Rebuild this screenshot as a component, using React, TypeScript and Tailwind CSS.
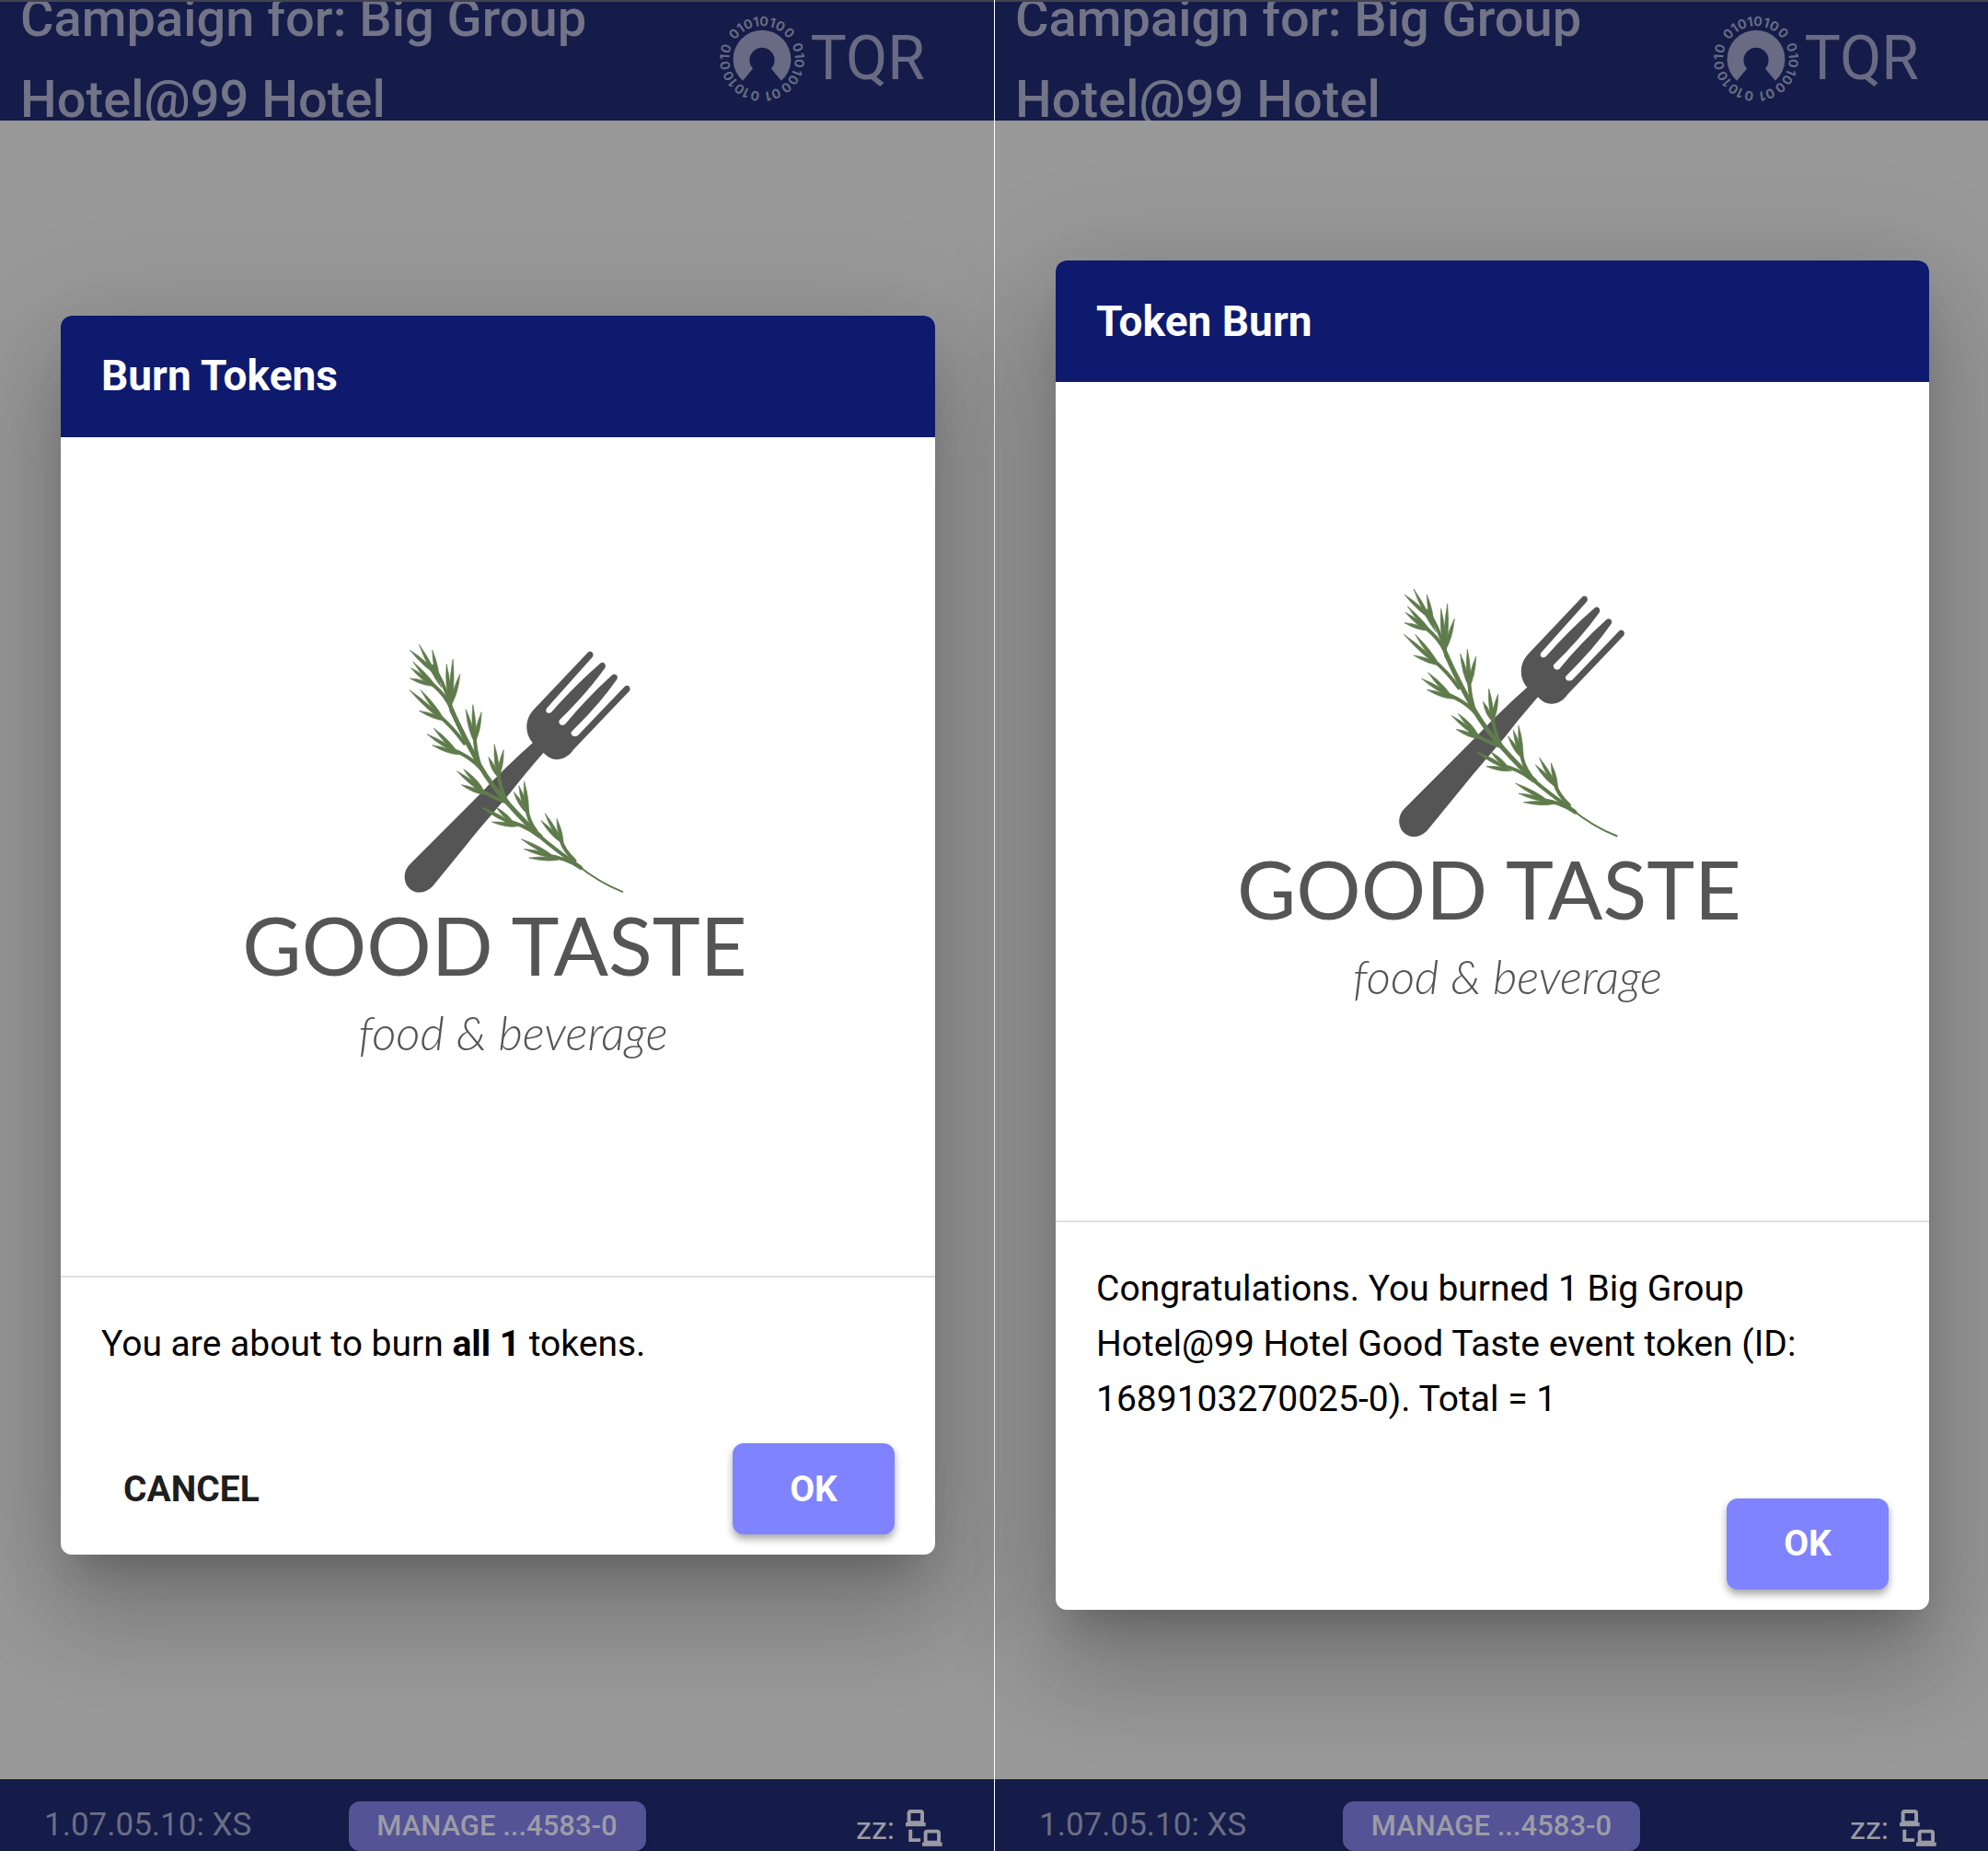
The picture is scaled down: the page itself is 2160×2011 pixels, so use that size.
import type { ReactNode } from 'react';

// [baseX, baseY, tipX, tipY]
const leaves = [
  [178, 200, 105, 60],
  [165, 160, 75, 78],
  [170, 185, 148, 78],
  [172, 215, 85, 116],
  [155, 198, 78, 136],
  [155, 195, 75, 170],
  [208, 260, 215, 108],
  [205, 250, 194, 124],
  [208, 260, 238, 157],
  [192, 314, 73, 208],
  [190, 312, 110, 208],
  [192, 308, 105, 276],
  [287, 385, 280, 256],
  [286, 380, 257, 271],
  [286, 380, 308, 280],
  [230, 412, 131, 352],
  [232, 415, 152, 332],
  [235, 418, 148, 388],
  [364, 500, 350, 385],
  [362, 492, 331, 427],
  [362, 495, 380, 403],
  [320, 545, 228, 472],
  [315, 535, 250, 466],
  [320, 548, 243, 517],
  [460, 620, 447, 505],
  [456, 606, 430, 520],
  [456, 610, 413, 540],
  [410, 645, 308, 590],
  [415, 645, 356, 590],
  [425, 652, 342, 638],
  [574, 715, 515, 610],
  [568, 705, 502, 633],
  [574, 715, 553, 627],
  [545, 752, 437, 693],
  [545, 752, 447, 726],
  [565, 760, 463, 755],
];

const branches = [
  'M138 182 Q185 215 210 268',
  'M207 235 Q203 255 212 280',
  'M172 294 Q215 330 252 382',
  'M286 355 Q286 400 302 452',
  'M208 400 Q275 425 312 470',
  'M362 470 Q366 525 390 570',
  'M290 525 Q345 560 395 575',
  'M456 592 Q458 630 486 668',
  'M390 635 Q445 645 492 682',
  'M566 695 Q575 730 612 764',
  'M520 746 Q585 755 632 788',
];

const leafPath = ([x1, y1, x2, y2]: number[]) => {
  const dx = x2 - x1;
  const dy = y2 - y1;
  const len = Math.hypot(dx, dy);
  const nx = (-dy / len) * 12;
  const ny = (dx / len) * 12;
  const mx = x1 + dx * 0.4;
  const my = y1 + dy * 0.4;
  return `M${x1} ${y1} Q${mx + nx} ${my + ny} ${x2} ${y2} Q${mx - nx} ${my - ny} ${x1} ${y1}Z`;
};

function GoodTasteLogo() {
  return (
    <svg viewBox="0 0 949 911" className="block w-full" role="img" aria-label="Good Taste food & beverage">
      <g transform="translate(354 205) scale(0.3333)">
        <path
          fill="#555"
          d="M475 380 C448 350 448 302 480 270 L654 86 C664 76 678 90 669 101 L520 268 C514 280 524 288 536 280 Q610 195 694 122 C704 112 718 126 709 138 Q650 220 562 306 C556 316 568 328 580 320 Q650 235 733 160 C743 150 757 164 748 175 Q690 258 601 344 C596 354 608 364 622 356 L774 197 C784 187 798 201 789 212 L608 402 C582 440 540 446 510 412 Q450 480 400 545 L300 662 L148 848 C120 876 84 872 66 846 C52 822 56 795 74 776 L300 550 Q390 455 475 380Z"
        />
        <g fill="none" stroke="#5f7b4c" strokeLinecap="round">
          <path strokeWidth="11" d="M150 130 Q185 180 208 262 Q235 340 300 450" />
          <path strokeWidth="15" d="M212 275 Q240 340 300 450 Q340 520 395 578 Q450 640 500 685" />
          <path strokeWidth="12" d="M490 678 Q550 730 630 785" />
          <path strokeWidth="6" d="M620 778 Q690 835 767 865" />
          {branches.map((d) => (
            <path key={d} d={d} strokeWidth="12" />
          ))}
        </g>
        <g fill="#5f7b4c" stroke="#5f7b4c" strokeWidth="2" strokeLinejoin="round">
          {leaves.map((leaf) => (
            <path key={leaf.join()} d={leafPath(leaf)} />
          ))}
        </g>
      </g>
      <text x="471" y="584" textAnchor="middle" fontSize="88" fill="#555" className="font-['Lato',sans-serif]">
        GOOD TASTE
      </text>
      <text x="491" y="665" textAnchor="middle" fontSize="51" fill="#555" className="font-['Lato',sans-serif] font-light italic">
        food &amp; beverage
      </text>
    </svg>
  );
}

// digits of the ring with their angle, clockwise from the top
const ringDigits: [string, number][] = [
  ['0', -48], ['1', -35], ['0', -22], ['1', -9], ['0', 3], ['1', 16], ['0', 29], ['0', 46],
  ['0', 72], ['1', 85], ['0', 97], ['1', 111], ['0', 124], ['0', 140], ['0', 158], ['1', 170],
  ['0', 191], ['1', 205], ['0', 217], ['1', 230], ['0', 243], ['0', 260], ['1', 273], ['0', 286],
];

function TqrLogo() {
  return (
    <a href="#" className="flex items-center gap-1 text-[#686b83]">
      <svg viewBox="0 0 290 290" className="size-24 overflow-visible" fill="currentColor" aria-hidden="true">
        <path d="M82 217 A95 95 0 1 1 208 217 L175 177 A41 41 0 1 0 115 177Z" />
        {ringDigits.map(([digit, angle]) => (
          <text
            key={angle}
            x="145"
            y="37"
            fontSize="43"
            textAnchor="middle"
            transform={`rotate(${angle} 145 145)`}
            className="font-['Inter',sans-serif] font-bold"
          >
            {digit}
          </text>
        ))}
      </svg>
      <span className="text-[66px] leading-none">TQR</span>
    </a>
  );
}

function NetworkIcon() {
  return (
    <svg viewBox="0 0 122 126" className="h-11 w-10" fill="none" stroke="currentColor" strokeWidth="12" aria-hidden="true">
      <rect x="11" y="8" width="44" height="37" rx="6" />
      <path d="M0 51H66" strokeWidth="13" />
      <path d="M16 68V103H49" />
      <rect x="66" y="74" width="44" height="37" rx="6" />
      <path d="M55 117H121" strokeWidth="13" />
    </svg>
  );
}

interface ScreenProps {
  title: string;
  children: ReactNode;
  cancelable?: boolean;
  className?: string;
}

function Screen({ title, children, cancelable = false, className = '' }: ScreenProps) {
  return (
    <div className={`flex flex-col bg-[#999] ${className}`}>
      <header className="flex h-[131px] items-center justify-between overflow-hidden border-t-2 border-[#41434f] bg-[#151c49] pr-[75px] pb-1.5 pl-[22px]">
        <h1 className="max-w-[640px] text-[56px] leading-[88px] font-medium text-[#727487]">
          Campaign for: Big Group Hotel@99 Hotel
        </h1>
        <TqrLogo />
      </header>

      <main className="relative flex flex-1 items-center pr-16 pb-8 pl-[66px]">
        <section
          role="dialog"
          aria-label={title}
          className="w-full overflow-hidden rounded-xl bg-white shadow-[0_30px_41px_-19px_rgba(0,0,0,0.2),0_66px_104px_8px_rgba(0,0,0,0.14),0_25px_126px_22px_rgba(0,0,0,0.12)]"
        >
          <h2 className="flex h-[132px] items-center bg-[#0d1a6e] px-11 text-[46px] font-bold text-white">{title}</h2>
          <GoodTasteLogo />
          <p className="border-t-2 border-[#e0e0e0] px-11 pt-[42px] text-[39px] leading-[60px] text-black">{children}</p>
          <div className="flex items-center justify-between px-11 pt-[78px] pb-[22px]">
            {cancelable && (
              <button type="button" className="h-[99px] px-6 text-[39px] font-bold text-[#1e1e1e]">
                CANCEL
              </button>
            )}
            <button
              type="button"
              className="ml-auto h-[99px] w-44 rounded-xl bg-[#7f83ff] text-[39px] font-bold text-white shadow-[0_5px_8px_rgba(0,0,0,0.35)]"
            >
              OK
            </button>
          </div>
        </section>
      </main>

      <footer className="grid grid-cols-[1fr_auto_1fr] items-center bg-[#151c49] px-12 pt-6">
        <span className="pb-1 text-[35px] leading-none text-[#6b6e85]">1.07.05.10: XS</span>
        <button
          type="button"
          className="h-[54px] w-[323px] rounded-xl bg-[#535396] text-[31px] font-medium text-[#9c9ca6] shadow-md"
        >
          MANAGE ...4583-0
        </button>
        <div className="flex items-center justify-end gap-3 pt-1 pr-2 text-[34px] leading-none text-[#9a9ba5]">
          <span>zz:</span>
          <NetworkIcon />
        </div>
      </footer>
    </div>
  );
}

export default function App() {
  return (
    <div className="grid min-h-screen grid-cols-2 font-['Roboto',sans-serif]">
      <Screen title="Burn Tokens" cancelable>
        You are about to burn <b>all 1</b> tokens.
      </Screen>
      <Screen title="Token Burn" className="border-l border-white">
        Congratulations. You burned 1 Big Group Hotel@99 Hotel Good Taste event token (ID: 1689103270025-0). Total = 1
      </Screen>
    </div>
  );
}
